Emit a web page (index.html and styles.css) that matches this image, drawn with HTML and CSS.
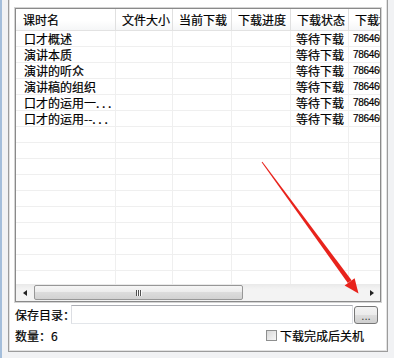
FILE: index.html
```html
<!DOCTYPE html>
<html lang="zh-CN">
<head>
    <meta charset="UTF-8">
    <title>课程下载</title>
    <link rel="stylesheet" href="styles.css">
</head>
<body>
    <div class="window">
        <div class="panel">
            <!-- Course list -->
            <div class="list">
                <div class="list-head">
                    <div class="hcell c1">课时名</div>
                    <div class="hcell c2">文件大小</div>
                    <div class="hcell c3">当前下载</div>
                    <div class="hcell c4">下载进度</div>
                    <div class="hcell c5">下载状态</div>
                    <div class="hcell c6">下载地址</div>
                </div>
                <div class="list-body">
                    <div class="col c1">
                        <div class="cell">口才概述</div>
                        <div class="cell">演讲本质</div>
                        <div class="cell">演讲的听众</div>
                        <div class="cell">演讲稿的组织</div>
                        <div class="cell">口才的运用一. . .</div>
                        <div class="cell">口才的运用--. . .</div>
                    </div>
                    <div class="col c2"></div>
                    <div class="col c3"></div>
                    <div class="col c4"></div>
                    <div class="col c5">
                        <div class="cell">等待下载</div>
                        <div class="cell">等待下载</div>
                        <div class="cell">等待下载</div>
                        <div class="cell">等待下载</div>
                        <div class="cell">等待下载</div>
                        <div class="cell">等待下载</div>
                    </div>
                    <div class="col c6">
                        <div class="cell num">7864601</div>
                        <div class="cell num">7864602</div>
                        <div class="cell num">7864603</div>
                        <div class="cell num">7864604</div>
                        <div class="cell num">7864605</div>
                        <div class="cell num">7864606</div>
                    </div>
                </div>
                <div class="hscroll">
                    <div class="sb-btn"><span class="tri-left"></span></div>
                    <div class="thumb"><span class="grip"></span></div>
                    <div class="sb-btn"><span class="tri-right"></span></div>
                </div>
            </div>

            <!-- Save folder -->
            <div class="save-row">
                <label class="save-label" for="saveDir">保存目录：</label>
                <input type="text" id="saveDir" class="save-input">
                <button class="browse">...</button>
            </div>

            <div class="foot-row">
                <span class="count">数量：6</span>
                <label class="shutdown"><span class="box"></span>下载完成后关机</label>
            </div>
        </div>
    </div>

    <!-- annotation arrow drawn over the window -->
    <svg class="pointer" width="394" height="358" viewBox="0 0 394 358">
        <polygon points="261.6,162.3 262.4,161.7 351.6,280.3 347.8,283.1" fill="#e8231c"/>
        <polygon points="358.5,293.5 344.6,285.6 354.6,278.2" fill="#e8231c"/>
    </svg>
</body>
</html>
```

FILE: styles.css
```css
body {
    margin: 0;
    width: 394px;
    height: 358px;
    overflow: hidden;
    position: relative;
    background: #f1f2f4;
    font-family: "Noto Sans CJK SC", "Liberation Sans", sans-serif;
    font-size: 12px;
    color: #000;
    -webkit-text-stroke: 0.2px #000;
}

.window {
    height: 358px;
    box-sizing: border-box;
    border-left: 2px solid #a4bedb;
    padding-left: 6px;
}

.panel {
    width: 380px;
    height: 352px;
    box-sizing: border-box;
    border: 1px solid #9c9c9c;
    border-top: 0;
    box-shadow: inset 1px 0 0 #e2e2e2, inset -1px 0 0 #e2e2e2, inset 0 -1px 0 #e2e2e2;
    background: #fff;
    padding: 8px 6px 0 6px;
}

/* list view */
.list {
    height: 294px;
    box-sizing: border-box;
    border: 1px solid #8a8a8a;
    box-shadow: 0 0 0 1px #d4d4d4;
    display: flex;
    flex-direction: column;
    overflow: hidden;
}

.list-head {
    display: flex;
    height: 22px;
    flex-shrink: 0;
    box-sizing: border-box;
    border-bottom: 1px solid #e2e2e2;
    background: linear-gradient(#fff, #fff 55%, #f5f6f7);
}

.hcell {
    flex-shrink: 0;
    box-sizing: border-box;
    border-right: 1px solid #e0e0e0;
    padding-left: 6px;
    line-height: 21px;
    white-space: nowrap;
    overflow: hidden;
}

.hcell.c1 {
    padding-left: 7px;
}

.c1 { width: 100px; }
.c2 { width: 57px; }
.c3 { width: 59px; }
.c4 { width: 59px; }
.c5 { width: 58px; }
.c6 { width: 80px; }

.list-body {
    flex: 1;
    display: flex;
    background: repeating-linear-gradient(to bottom, transparent 0, transparent 15px, #efefef 15px, #efefef 16px);
}

.col {
    flex-shrink: 0;
    box-sizing: border-box;
    border-right: 1px solid #efefef;
}

.cell {
    height: 16px;
    line-height: 16px;
    padding-left: 5px;
    white-space: nowrap;
    overflow: hidden;
}

.c1 .cell {
    padding-left: 8px;
}

.cell.num {
    padding-left: 4px;
    font-family: "Liberation Sans", sans-serif;
    font-size: 10px;
    letter-spacing: -0.3px;
}

/* horizontal scrollbar */
.hscroll {
    height: 17px;
    flex-shrink: 0;
    display: flex;
    align-items: center;
    background: linear-gradient(#e9e9e9, #f3f3f3 30%, #f3f3f3);
}

.sb-btn {
    width: 17px;
    height: 17px;
    display: flex;
    align-items: center;
    justify-content: center;
    flex-shrink: 0;
}

.tri-left {
    border: 3px solid transparent;
    border-right: 4px solid #222;
    border-left: 0;
}

.tri-right {
    border: 3px solid transparent;
    border-left: 4px solid #222;
    border-right: 0;
}

.thumb {
    width: 209px;
    height: 15px;
    margin-left: 1px;
    box-sizing: border-box;
    border: 1px solid #979797;
    border-radius: 2px;
    background: linear-gradient(#f6f6f6, #ececec 45%, #dcdcdc 50%, #d2d2d2);
    display: flex;
    align-items: center;
    justify-content: center;
}

.grip {
    width: 6px;
    height: 6px;
    background: repeating-linear-gradient(to right, #505050 0, #505050 1px, #fafafa 1px, #fafafa 2px);
}

.hscroll .sb-btn:last-child {
    margin-left: auto;
}

/* bottom rows */
.save-row {
    display: flex;
    align-items: center;
    height: 19px;
    margin-top: 3px;
}

.save-label {
    width: 56px;
    flex-shrink: 0;
    white-space: nowrap;
}

.save-input {
    width: 282px;
    height: 19px;
    box-sizing: border-box;
    margin: 0;
    border: 1px solid;
    border-color: #abadb3 #dcdee3 #e3e6ea #dcdee3;
    background: #fff;
    position: relative;
}

.browse {
    width: 24px;
    height: 18px;
    margin: 0 0 0 1px;
    padding: 0;
    box-sizing: border-box;
    border: 1px solid #777;
    border-radius: 3px;
    background: linear-gradient(#f3f3f3, #ebebeb 50%, #dddddd 51%, #cfcfcf);
    font-family: "DejaVu Sans", sans-serif;
    font-size: 10px;
    line-height: 20px;
    color: #333;
    -webkit-text-stroke: 0;
}

.foot-row {
    display: flex;
    align-items: center;
    height: 18px;
    margin-top: 2px;
}

.shutdown {
    margin-left: auto;
    margin-right: 17px;
    display: flex;
    align-items: center;
    gap: 3px;
}

.box {
    width: 11px;
    height: 11px;
    box-sizing: border-box;
    border: 1px solid #8e8f8f;
    background: linear-gradient(135deg, #d8d8d8, #f7f7f7);
}

.pointer {
    position: absolute;
    left: 0;
    top: 0;
    pointer-events: none;
}
```
